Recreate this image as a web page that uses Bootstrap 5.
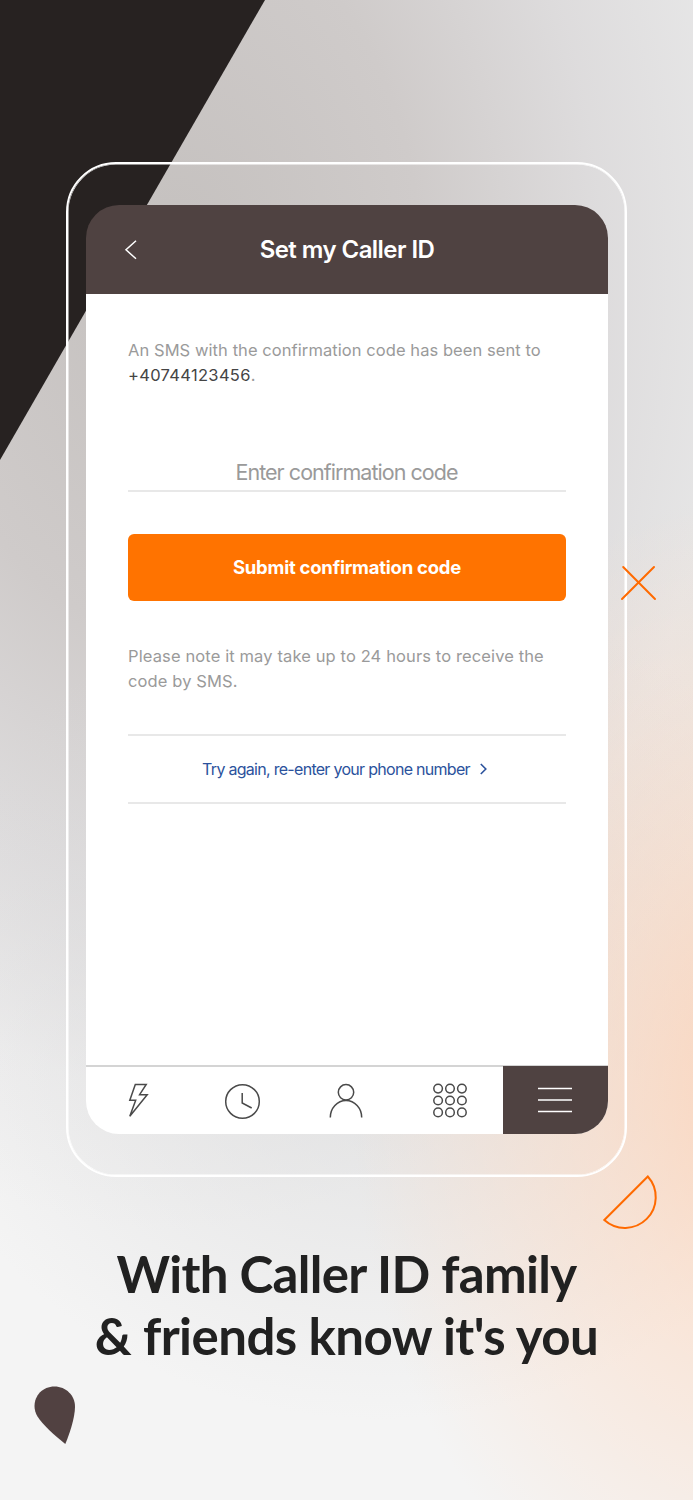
<!DOCTYPE html>
<html lang="en">
<head>
<meta charset="utf-8">
<meta name="viewport" content="width=device-width, initial-scale=1">
<title>Set my Caller ID</title>
<link href="https://cdn.jsdelivr.net/npm/bootstrap@5.3.0/dist/css/bootstrap.min.css" rel="stylesheet">
<script src="https://cdn.jsdelivr.net/npm/bootstrap@5.3.0/dist/js/bootstrap.bundle.min.js" defer></script>
<style>
body{font-family:Inter,"Liberation Sans",sans-serif;color:#9a9a9a;background:#f3f3f3}
.stage{width:693px;height:1500px;padding-top:162px;isolation:isolate;
background:
radial-gradient(ellipse 420px 590px at 770px 1080px,rgba(255,207,176,.8),rgba(255,212,184,.48) 42%,rgba(255,220,198,0) 100%),
radial-gradient(ellipse 480px 420px at 380px 1000px,rgba(215,215,216,.7),rgba(228,228,228,0) 100%),
radial-gradient(ellipse 660px 960px at 170px 270px,#c4c0be,#cfcbca 38%,rgba(220,218,219,.85) 65%,rgba(230,229,230,.35) 85%,rgba(238,238,238,0) 100%),
linear-gradient(#e6e6e6 0,#e6e6e6 35%,#f4f4f4 72%)}
.wedge{z-index:-1;width:265px;height:460px}
.frame{width:561px;height:1015px;border:2px solid #fff;box-shadow:inset 0 0 0 .5px #fff;border-radius:50px;padding:41px 17px 41px 18px}
.phone{height:929px;border-radius:33px}
.bar{height:89px;background:#4f4241;border-radius:33px 33px 0 0}
.bar .back{left:38px;top:35px}
.ttl{font-size:24px;font-weight:600;letter-spacing:-.55px}
.pane{padding:44px 42px 0;background:#fff}
.note{font-size:16.5px;line-height:25px;letter-spacing:.07px;white-space:nowrap}
.send + .note{letter-spacing:.12px}
.note + .again{margin-top:40px}
.num{color:#444;letter-spacing:.32px}
.code{height:41px;margin-top:63px;padding-top:4px;padding-right:1px;font-size:21.5px;letter-spacing:-.97px;border-bottom:2px solid #e8e8e8}
.send{height:67px;margin:42px 0 43px;border-radius:6px;background:#ff7300;color:#fff;font-size:18.5px;font-weight:700;letter-spacing:-.24px;border:0}
.again{height:70px;border:solid #e8e8e8;border-width:2px 0;color:#2b529c;font-size:16px;letter-spacing:-.71px;padding-right:5px}
.again svg{margin-left:10px}
.tabs{height:69px;border-top:2px solid #d4d4d4;background:#fff;border-radius:0 0 33px 33px}
.tabs a{flex:1 1 0;height:67px}
.tabs .on{background:#4f4241;height:68px;margin-top:-1px;margin-left:-1px;border-radius:0 0 33px 0}
.tabs svg{fill:none;stroke:#4a4a4a;stroke-width:1.5;margin-left:-1px}
.tabs .bolt{margin-left:2px}
.tabs .keys{margin-left:-4px}
.tabs .person{margin-left:-2px}
.tabs .on svg{stroke:#fff}
.slogan{margin-top:66px;font:700 51px/62px Lato,sans-serif;color:#212121;letter-spacing:-.55px}
.slogan .first{letter-spacing:-.7px}
.orn{fill:none;stroke:#ff6a00;stroke-width:2}
.cross{left:620px;top:564px}
.half{left:602px;top:1174px}
.drop{left:33px;top:1385px}
</style>
</head>
<body>
<main class="stage position-relative overflow-hidden">
<svg class="wedge position-absolute top-0 start-0" viewBox="0 0 265 460"><path d="M0 0H265L0 460Z" fill="#272221"/></svg>
<div class="frame mx-auto">
<section class="phone d-flex flex-column">
<header class="bar position-relative d-flex align-items-center justify-content-center text-white">
<svg class="back position-absolute" width="14" height="20" viewBox="0 0 14 20" fill="none" stroke="#fff" stroke-width="1.5"><path d="M12 .8 2 9.8 12 18.8"/></svg>
<span class="ttl">Set my Caller ID</span>
</header>
<div class="pane flex-grow-1">
<p class="note mb-0">An SMS with the confirmation code has been sent to<br><span class="num">+40744123456</span>.</p>
<div class="code d-flex justify-content-center align-items-center">Enter confirmation code</div>
<button type="button" class="send w-100 d-flex align-items-center justify-content-center">Submit confirmation code</button>
<p class="note mb-0">Please note it may take up to 24 hours to receive the<br>code by SMS.</p>
<a class="again d-flex align-items-center justify-content-center text-decoration-none">Try again, re-enter your phone number<svg width="7" height="12" viewBox="0 0 7 12" fill="none" stroke="#2b529c" stroke-width="1.6"><path d="m.8 1 5 5-5 5"/></svg></a>
</div>
<nav class="tabs d-flex">
<a class="d-flex align-items-center justify-content-center"><svg class="bolt" width="24" height="38" viewBox="0 0 24 38"><path d="M8.3 2.5H19.2L12.6 12.7H20.2L2.8 34.3 8.7 18.2H2.8Z"/></svg></a>
<a class="d-flex align-items-center justify-content-center"><svg width="38" height="38" viewBox="0 0 38 38"><circle cx="19.5" cy="19.5" r="16.8"/><path d="M19.2 11V21L28.7 26"/></svg></a>
<a class="d-flex align-items-center justify-content-center"><svg class="person" width="38" height="38" viewBox="0 0 38 38"><circle cx="19" cy="10.3" r="7.7"/><path d="M3.3 35.5A15.7 17 0 0 1 34.7 35.500"/></svg></a>
<a class="d-flex align-items-center justify-content-center"><svg class="keys" width="38" height="38" viewBox="0 0 38 38"><circle cx="7.1" cy="6.6" r="4.3"/><circle cx="19" cy="6.6" r="4.3"/><circle cx="30.9" cy="6.6" r="4.3"/><circle cx="7.1" cy="18.5" r="4.3"/><circle cx="19" cy="18.5" r="4.3"/><circle cx="30.9" cy="18.5" r="4.3"/><circle cx="7.1" cy="30.4" r="4.3"/><circle cx="19" cy="30.4" r="4.3"/><circle cx="30.9" cy="30.4" r="4.3"/></svg></a>
<a class="on d-flex align-items-center justify-content-center"><svg width="38" height="38" viewBox="0 0 38 38"><path d="M2 7.5H36M2 19H36M2 30.5H36"/></svg></a>
</nav>
</section>
</div>
<h1 class="slogan text-center mb-0"><span class="first">With Caller ID family</span><br>&amp; friends know it's you</h1>
<svg class="orn cross position-absolute" width="38" height="38" viewBox="0 0 38 38" stroke-linecap="round"><path d="M3.2 3 35 35M34 3 2 35"/></svg>
<svg class="orn half position-absolute" width="58" height="58" viewBox="0 0 58 58"><path d="M45.8 2.5 2.3 46A30.8 30.8 0 0 0 45.8 2.5Z"/></svg>
<svg class="drop position-absolute" width="44" height="60" viewBox="0 0 44 60"><path d="M32.3 59C20 49 10 40 4.500 31.500C-3.500 18 5.500 1.500 21.500 1.500C33 1.500 42 10.500 42 21.500C42 33 36.500 49 32.300 59Z" fill="#514141"/></svg>
</main>
</body>
</html>
